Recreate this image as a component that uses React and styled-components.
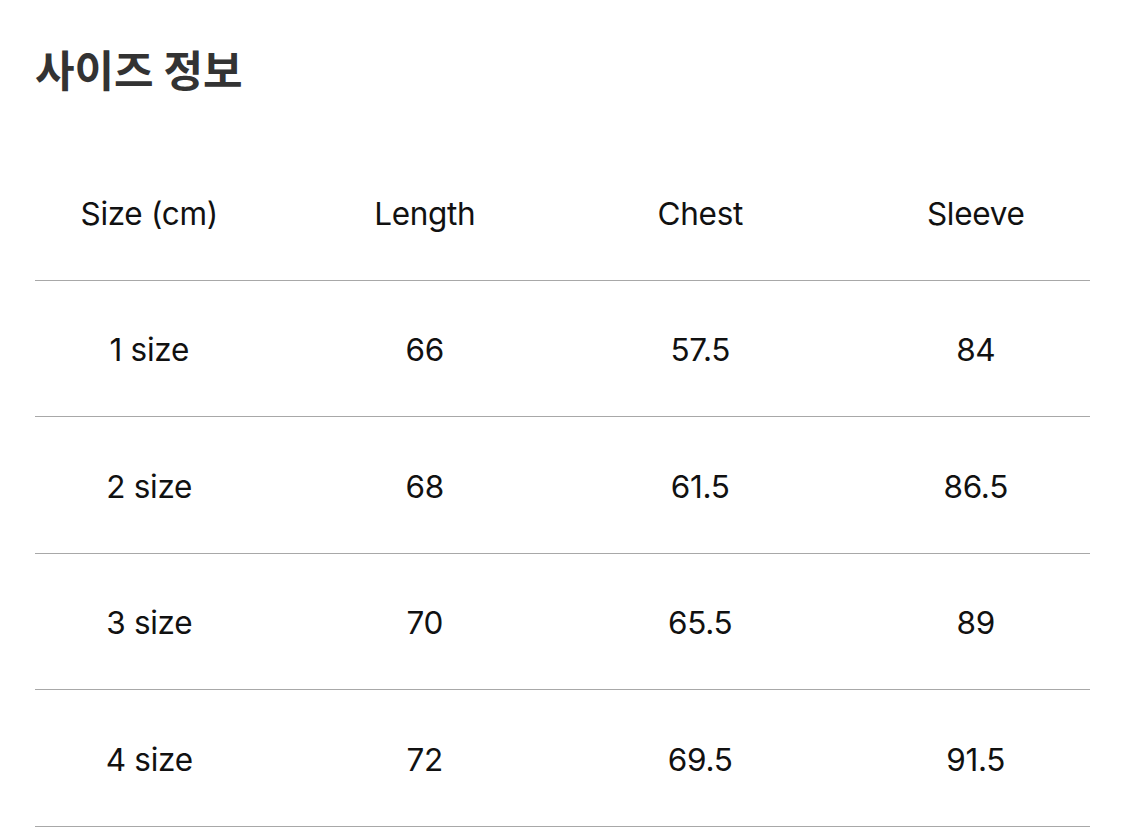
import React from "react";
import styled, { createGlobalStyle } from "styled-components";

const sizes = [
  ["1 size", "66", "57.5", "84"],
  ["2 size", "68", "61.5", "86.5"],
  ["3 size", "70", "65.5", "89"],
  ["4 size", "72", "69.5", "91.5"],
];

const App = () => {
  return (
    <Page>
      <GlobalStyle />
      <Title>사이즈 정보</Title>
      <Table>
        <Row>
          <Cells>
            <Cell>Size (cm)</Cell>
            <Cell>Length</Cell>
            <Cell>Chest</Cell>
            <Cell>Sleeve</Cell>
          </Cells>
        </Row>
        {sizes.map((row) => (
          <Row key={row[0]}>
            <Cells>
              {row.map((v, i) => (
                <Cell key={i}>{v}</Cell>
              ))}
            </Cells>
          </Row>
        ))}
      </Table>
    </Page>
  );
};

export default App;

const GlobalStyle = createGlobalStyle`
  body {
    margin: 0;
    background: #ffffff;
    font-family: Inter, "Noto Sans CJK KR", sans-serif;
  }
`;

const Page = styled.div`
  width: 1125px;
  padding: 0 35px;
  box-sizing: border-box;
  overflow: hidden;
`;

const Title = styled.h1`
  margin: 0;
  padding-top: 38px;
  height: 144px;
  box-sizing: border-box;
  font-family: "Noto Sans CJK KR", sans-serif;
  font-size: 43px;
  font-weight: 700;
  line-height: 60px;
  color: #333333;
  letter-spacing: 0;
`;

const Table = styled.div`
  display: flex;
  flex-direction: column;
`;

const Row = styled.div`
  height: 136.5px;
  box-sizing: border-box;
  border-bottom: 1px solid #a8a8a8;
`;

const Cells = styled.div`
  display: grid;
  grid-template-columns: repeat(4, 1fr);
  align-items: center;
  height: 100%;
  padding-top: 3px;
  box-sizing: border-box;
  margin: 0 -23.5px;
`;

const Cell = styled.div`
  text-align: center;
  font-size: 31.5px;
  color: #111111;
  line-height: 1;
  letter-spacing: -0.3px;
`;
